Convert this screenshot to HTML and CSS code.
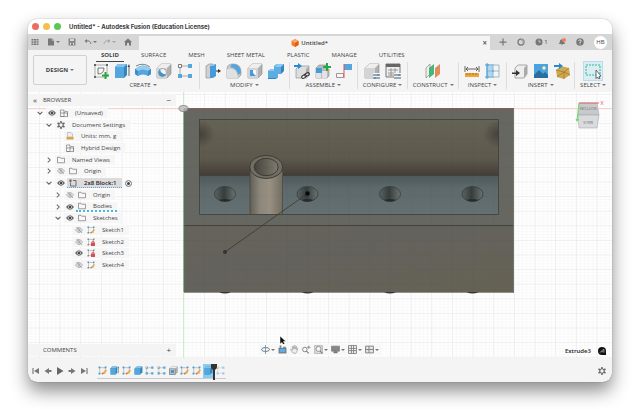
FILE: index.html
```html
<!DOCTYPE html>
<html lang="en">
<head>
    <meta charset="UTF-8">
    <meta name="viewport" content="width=device-width, initial-scale=1.0">
    <title>Untitled* - Autodesk Fusion (Education License)</title>
    <link rel="stylesheet" href="styles.css">
</head>
<body>
    <!-- Shared icons -->
    <svg class="sprite" aria-hidden="true">
        <symbol id="down" viewBox="0 0 10 10"><path d="M2 3.5 5 6.5 8 3.5" fill="none" stroke="#666" stroke-width="1.3"/></symbol>
        <symbol id="right" viewBox="0 0 10 10"><path d="M3.5 2 6.5 5 3.5 8" fill="none" stroke="#666" stroke-width="1.3"/></symbol>
        <symbol id="eye" viewBox="0 0 16 12"><path d="M0 6Q8-5 16 6 8 17 0 6Z" fill="#666"/><circle cx="8" cy="6" r="3.6" fill="#f4f4f4"/><circle cx="8" cy="6" r="2.4" fill="#444"/></symbol>
        <symbol id="eye-off" viewBox="0 0 16 12"><path d="M1 6Q8-4 15 6 8 16 1 6ZM3 0l11 12" fill="none" stroke="#888" stroke-width="1.3"/><circle cx="8" cy="6" r="2.4" fill="none" stroke="#888" stroke-width="1.3"/></symbol>
        <symbol id="folder" viewBox="0 0 16 14"><path d="M1 12.5V1.5h5l1.5 2H15v9Z" fill="#f8f8f8" stroke="#777" stroke-width="1.4"/></symbol>
        <symbol id="parts" viewBox="0 0 16 16"><path d="M1 15V2h7v13ZM1 8h14v7H1M8 8l2-3h5v10" fill="none" stroke="#777" stroke-width="1.3"/></symbol>
        <symbol id="gear" viewBox="0 0 16 16"><path d="M8 0v4M8 12v4M1 4l3.6 2M11.4 10l3.6 2M1 12l3.6-2M11.4 6 15 4" stroke="#666" stroke-width="3"/><circle cx="8" cy="8" r="4.5" fill="none" stroke="#666" stroke-width="2"/></symbol>
        <symbol id="units" viewBox="0 0 16 16"><path d="M3 10V1h7l3 3v6Z" fill="#eee" stroke="#999"/><path d="M1 10h14v5H1Z" fill="#d9a441"/></symbol>
        <symbol id="component" viewBox="0 0 16 16"><path d="M3 7v7h11V3H8" fill="none" stroke="#555" stroke-width="1.6"/><path d="M1 1h4v5H1Z" fill="#666"/></symbol>
        <symbol id="sketch" viewBox="0 0 16 16"><path d="M3 3h10v10H3Z" fill="none" stroke="#999"/><path d="M1 1h3v3H1ZM12 1h3v3h-3ZM1 12h3v3H1Z" fill="#3f9bd8"/><path d="m7 15 1-3 6-6 2 2-6 6Z" fill="#f2a53a"/><path d="m7 15 1-3 2 2Z" fill="#d9502e"/></symbol>
        <symbol id="sketch-lock" viewBox="0 0 16 16"><path d="M3 3h10v10H3Z" fill="none" stroke="#999"/><path d="M1 1h3v3H1ZM12 1h3v3h-3ZM1 12h3v3H1Z" fill="#888"/><path d="M8 9h8v7H8Z" fill="#d84b58"/><path d="M10 9V7q2-2 4 0v2" fill="none" stroke="#d84b58" stroke-width="1.5"/></symbol>
        <symbol id="box" viewBox="0 0 16 16"><path d="M1 4.5 5 1h10v10l-4 4H1Z" fill="#3484c0"/><path d="M1 4.5 5 1h10l-4 3.5Z" fill="#84c3ec"/><path d="M1 4.5h10V15H1Z" fill="#55a6dd"/></symbol>
        <symbol id="extrude" viewBox="0 0 16 16"><path d="M1 4 4 1h9v11l-3 3H1Z" fill="#3484c0"/><path d="M1 4 4 1h9l-3 3Z" fill="#84c3ec"/><path d="M1 4h9v11H1Z" fill="#55a6dd"/><path d="M15 13V4" stroke="#444" stroke-width=".8"/><path d="m13.5 4 1.5-3 1 3Z" fill="#444"/></symbol>
        <symbol id="gray-box" viewBox="0 0 16 16"><path d="M1 5 5 1h10v10l-4 4H1Z" fill="#b1b1b1" stroke="#888" stroke-width=".6"/><path d="M1 5 5 1h10l-4 4Z" fill="#eee"/><path d="M1 5h10v10H1Z" fill="#d4d4d4"/></symbol>
        <symbol id="pattern" viewBox="0 0 16 16"><path d="M3 3h10M3 3v10h10" fill="none" stroke="#aaa"/><path d="M1.5 1.5h3v3h-3Z" fill="#fff" stroke="#777"/><path d="M11 1h4v4h-4ZM1 11h4v4H1ZM11 11h4v4h-4Z" fill="#55a6dd"/></symbol>
    </svg>

    <main class="window">
        <header class="titlebar">
            <span class="light red"></span>
            <span class="light yellow"></span>
            <span class="light green"></span>
            <h1>Untitled* - Autodesk Fusion (Education License)</h1>
        </header>

        <div class="tabbar">
            <div class="quick">
                <button aria-label="Data panel"><svg viewBox="0 0 16 16"><path d="M1 2h4v3H1Zm5 0h4v3H6Zm5 0h4v3h-4ZM1 6.5h4v3H1Zm5 0h4v3H6Zm5 0h4v3h-4ZM1 11h4v3H1Zm5 0h4v3H6Zm5 0h4v3h-4Z" fill="#777"/></svg></button>
                <button class="menu" aria-label="File"><svg viewBox="0 0 16 16"><path d="M2 1h8l4 4v10H2Z" fill="#777"/><path d="M10 1v4h4" fill="none" stroke="#ddd"/></svg><i class="caret"></i></button>
                <button aria-label="Save"><svg viewBox="0 0 16 16"><path d="M1 1h14v14H1Z" fill="#888"/><path d="M4 2h8v4H4ZM4 10h8v4H4Z" fill="#d6d6d6"/><path d="M6 11h4v3H6Z" fill="#666"/></svg></button>
                <button class="menu" aria-label="Undo"><svg viewBox="0 0 16 16"><path d="M4 6q9-2 10 6" fill="none" stroke="#777" stroke-width="2"/><path d="m1 6 5-4v8Z" fill="#777"/></svg><i class="caret"></i></button>
                <button class="menu dim" aria-label="Redo"><svg viewBox="0 0 16 16"><path d="M12 6Q3 4 2 12" fill="none" stroke="#777" stroke-width="2"/><path d="m15 6-5-4v8Z" fill="#777"/></svg><i class="caret"></i></button>
                <button class="home" aria-label="Home"><svg viewBox="0 0 16 16"><path d="M8 1 0 8h2v7h4v-5h4v5h4V8h2Z" fill="#777"/></svg></button>
            </div>
            <div class="doc-tab">
                <svg viewBox="0 0 16 16"><path d="m8 0 7 4v8l-7 4-7-4V4Z" fill="#f47b28"/><path d="m8 0 7 4-7 4-7-4Z" fill="#ffa565"/><path d="m8 8 7-4v8l-7 4Z" fill="#df5d15"/></svg>
                <span>Untitled*</span>
                <button aria-label="Close tab">×</button>
            </div>
            <div class="account">
                <button aria-label="New tab"><svg viewBox="0 0 16 16"><path d="M8 1v14M1 8h14" stroke="#777" stroke-width="2.5"/></svg></button>
                <button aria-label="Extensions"><svg viewBox="0 0 16 16"><circle cx="8" cy="8" r="6" fill="none" stroke="#777" stroke-width="2.5"/><path d="M8 8V2a6 6 0 0 1 5 9Z" fill="#aaa"/><circle cx="8" cy="8" r="2.5" fill="#d6d6d6"/></svg></button>
                <button class="jobs" aria-label="Job status"><svg viewBox="0 0 16 16"><circle cx="8" cy="8" r="7" fill="#777"/><path d="M8 3v5h4" fill="none" stroke="#ddd" stroke-width="1.5"/></svg>1</button>
                <button aria-label="Notifications"><svg viewBox="0 0 16 16"><path d="M1 12q3-2 3-7 4-5 8 0 0 5 3 7ZM6 13h4l-2 2Z" fill="#777"/><circle cx="12" cy="4" r="4" fill="#f08058"/></svg></button>
                <button aria-label="Help"><svg viewBox="0 0 16 16"><circle cx="8" cy="8" r="7.5" fill="#777"/><path d="M5.5 6q0-2.500 2.500-2.500T10.500 6Q10 7.500 8 8v2M8 11v2" fill="none" stroke="#eee" stroke-width="1.7"/></svg></button>
                <button class="avatar">HB</button>
            </div>
        </div>

        <div class="toolbar">
            <button class="workspace">DESIGN <i class="caret"></i></button>
            <div class="ribbon">
                <nav class="ribbon-tabs">
                    <a href="#solid" class="active">SOLID</a>
                    <a href="#surface">SURFACE</a>
                    <a href="#mesh">MESH</a>
                    <a href="#sheet">SHEET METAL</a>
                    <a href="#plastic">PLASTIC</a>
                    <a href="#manage">MANAGE</a>
                    <a href="#utilities">UTILITIES</a>
                </nav>
                <div class="groups">
                    <section class="group create">
                        <div class="tools">
                            <button aria-label="Create sketch"><svg viewBox="0 0 16 16"><path d="M2 2h12v12H2Z" fill="#f8f8f8" stroke="#999" stroke-width=".8"/><path d="M5 5h6q0 6-6 6Z" fill="none" stroke="#555" stroke-width=".8"/><path d="M1 1h2v2H1ZM13 1h2v2h-2ZM1 13h2v2H1Z" fill="#666"/><path d="M12.5 9v7M9 12.5h7" stroke="#27a844" stroke-width="2"/></svg></button>
                            <button aria-label="Extrude"><svg><use href="#extrude"/></svg></button>
                            <button aria-label="Revolve"><svg viewBox="0 0 16 16"><path d="M0 6q8-7 16 0v5l-3 2q-5-3-10 0l-3-2Z" fill="#55a6dd"/><path d="M0 6q8-7 16 0l-3 2q-5-3-10 0Z" fill="#92cdf2"/><path d="M3 8v5L0 11V6ZM13 8v5l3-2V6Z" fill="#3c8dc8"/><path d="M1 3q7-4 14 1" fill="none" stroke="#666" stroke-width=".8"/></svg></button>
                            <button aria-label="Hole"><svg viewBox="0 0 16 16"><use href="#gray-box"/><circle cx="6.5" cy="9.5" r="4" fill="#f3f3f3" stroke="#777" stroke-width=".6"/><path d="M4 6.5a4 4 0 1 0 6 5Q5 11 4 6.5Z" fill="#3e95d2"/></svg></button>
                            <button aria-label="Pattern"><svg><use href="#pattern"/></svg></button>
                        </div>
                        <button class="group-name">CREATE <i class="caret"></i></button>
                    </section>
                    <section class="group">
                        <div class="tools">
                            <button aria-label="Press pull"><svg viewBox="0 0 16 16"><path d="M1 3 4 1h4v13l-3 1H1Z" fill="#d0d0d0" stroke="#888" stroke-width=".6"/><path d="M5 3 8 1h3v12l-3 2H5Z" fill="#459cd8"/><path d="M5 3 8 1h3L8 3Z" fill="#94cef3"/><path d="M11 8h3" stroke="#333"/><path d="m13 6 3 2-3 2Z" fill="#333"/></svg></button>
                            <button aria-label="Fillet"><svg viewBox="0 0 16 16"><path d="M1 15V6q0-5 6-5 8 0 8 8v3l-3 3Z" fill="#cacaca" stroke="#888" stroke-width=".6"/><path d="M1 6h5q5 1 6 9H1Z" fill="#e1e1e1"/><path d="M6 1q9 0 9 9l-3 2Q11 5 4 4Z" fill="#55a6dd"/></svg></button>
                            <button aria-label="Shell"><svg viewBox="0 0 16 16"><use href="#gray-box"/><path d="M3 7h6v6H3Z" fill="#f7f7f7"/><path d="M3 7v6h6l-3-3V7Z" fill="#459cd8"/></svg></button>
                            <button aria-label="Combine"><svg viewBox="0 0 16 16"><path d="m0 8 3-2h3V3l3-2h7v7l-3 3h-3v3l-2 2H0Z" fill="#3484c0"/><path d="M0 8h6V4h7v7h-3v4H0Z" fill="#5cade2"/><path d="m0 8 3-2h3v2ZM6 4l3-3h7l-3 3Z" fill="#8bc9f0"/></svg></button>
                        </div>
                        <button class="group-name">MODIFY <i class="caret"></i></button>
                    </section>
                    <section class="group">
                        <div class="tools">
                            <button aria-label="Insert component"><svg viewBox="0 0 16 16"><path d="m2 6 3-3h10v10l-2 2H2Z" fill="#ddd" stroke="#888" stroke-width=".6"/><path d="M12 6 15 3v10l-3 2Z" fill="#aaa"/><path d="M0 2h4V0l4 3-4 3V4H0Z" fill="#268ad6"/><path d="m8 15 6-3" stroke="#f4f4f4" stroke-width="4"/><g fill="none" stroke="#333"><ellipse cx="10" cy="13.5" rx="2.5" ry="1.5" transform="rotate(-30 10 13.5)"/><ellipse cx="13" cy="11.5" rx="2.5" ry="1.5" transform="rotate(-30 13 11.5)"/></g></svg></button>
                            <button aria-label="New component"><svg viewBox="0 0 16 16"><path d="m1 5 3-3h7v4h3v7l-2 2H1Z" fill="#bbb" stroke="#888" stroke-width=".6"/><path d="M1 5h6v5H1Z" fill="#459cd8"/><path d="M1 10h5v5H1ZM7 8h5v7H7Z" fill="#e2e2e2"/><path d="M12 0v8M8 4h8" stroke="#27a844" stroke-width="2"/></svg></button>
                            <button aria-label="Joint"><svg viewBox="0 0 16 16"><path d="M8 1h8v6H8Z" fill="#55a6dd"/><path d="M.5 10.5h7v4h-7Z" fill="#f8f8f8" stroke="#999"/><path d="M8 1v14" stroke="#e0525b"/></svg></button>
                        </div>
                        <button class="group-name">ASSEMBLE <i class="caret"></i></button>
                    </section>
                    <section class="group">
                        <div class="tools">
                            <button aria-label="Configure"><svg viewBox="0 0 16 16"><use href="#gray-box"/><path d="M9 10h7v6H9Z" fill="#f4f4f4"/><path d="M9 12h7M9 15h7" stroke="#555"/><path d="M13 11h2v2h-2ZM10 14h2v2h-2Z" fill="#459cd8"/></svg></button>
                            <button aria-label="Configuration table"><svg viewBox="0 0 16 16"><path d="M1 1h14v13H1Z" fill="#eee" stroke="#777"/><path d="M1 1h14v3H1Z" fill="#666"/><path d="M3 7h10M3 10h6M3 12h6M6 5v8M10 5v5" stroke="#888" stroke-width=".8"/><path d="M9 10h7v6H9Z" fill="#f4f4f4"/><path d="M9 12h7M9 15h7" stroke="#555"/><path d="M13 11h2v2h-2Z" fill="#459cd8"/></svg></button>
                        </div>
                        <button class="group-name">CONFIGURE <i class="caret"></i></button>
                    </section>
                    <section class="group">
                        <div class="tools">
                            <button aria-label="Offset plane"><svg viewBox="0 0 16 16"><path d="m1 5 4-4v10l-4 4Z" fill="#eee" stroke="#888" stroke-width=".7"/><path d="m4 5 5-4v10l-5 4Z" fill="#44b878"/><path d="m10 5 5-4v10l-5 4Z" fill="#e38c5b"/></svg></button>
                        </div>
                        <button class="group-name">CONSTRUCT <i class="caret"></i></button>
                    </section>
                    <section class="group">
                        <div class="tools">
                            <button aria-label="Measure"><svg viewBox="0 0 16 16"><path d="M1 3v6M15 3v6M2 6h12M4 4 2 6l2 2M12 4l2 2-2 2" fill="none" stroke="#555" stroke-width=".9"/><path d="M1 10h14v4H1Z" fill="#eca536"/><path d="M3 10v2M6 10v2M9 10v2M12 10v2" stroke="#946414" stroke-width=".7"/></svg></button>
                            <button aria-label="Interference"><svg viewBox="0 0 16 16"><path d="M2 1h6v14H2Z" fill="#a9d8f5"/><path d="M2 2h12v12H2ZM2 8h12M8 1v14" fill="none" stroke="#8aa9bd" stroke-width=".8"/><path d="M2 0v16M0 2h4M0 14h4M7 8h2" stroke="#4a9dd6"/></svg></button>
                        </div>
                        <button class="group-name">INSPECT <i class="caret"></i></button>
                    </section>
                    <section class="group">
                        <div class="tools">
                            <button aria-label="Insert derive"><svg viewBox="0 0 16 16"><path d="m3 5 3-3h9v9l-3 4H3Z" fill="#eee" stroke="#888" stroke-width=".7"/><path d="m12 5 3-3v9l-3 4Z" fill="#aaa"/><path d="M0 11V9.5h4V7l4 3-4 3v-2Z" fill="#333"/></svg></button>
                            <button aria-label="Canvas"><svg viewBox="0 0 16 16"><path d="M1 1h14v14H1Z" fill="#4aa2df"/><circle cx="11" cy="5" r="1.7" fill="#fff1b0"/><path d="m1 12 5-5 4 4 2-2 3 3v3H1Z" fill="#286e9f"/></svg></button>
                            <button aria-label="Insert mesh"><svg viewBox="0 0 16 16"><path d="m2 7 5-4 8 2 1 7-6 4-7-2Z" fill="#cfa850"/><path d="m2 7 8 2 5-4M10 9v7M3 14l7-5 6 3" fill="none" stroke="#997733" stroke-width=".7"/><path d="M0 2h5V0l4 3-4 3V4H0Z" fill="#268ad6"/></svg></button>
                        </div>
                        <button class="group-name">INSERT <i class="caret"></i></button>
                    </section>
                    <section class="group">
                        <div class="tools">
                            <button class="selected" aria-label="Select"><svg viewBox="0 0 16 16"><path d="M1 2h14v10H1Z" fill="none" stroke="#35b984" stroke-dasharray="2 1"/><path d="m11 7 5 6-2 .5 1 2-1.5.5-1-2-1.5 1.5Z" fill="#fff" stroke="#444" stroke-width=".8"/></svg></button>
                        </div>
                        <button class="group-name">SELECT <i class="caret"></i></button>
                    </section>
                </div>
            </div>
        </div>

        <div class="viewport">
            <svg class="scene" viewBox="28 92 584 266" preserveAspectRatio="xMidYMid slice" role="img" aria-label="2x8 Block model">
                <defs>
                    <pattern id="minor" x="183.5" y="108.5" width="4.13" height="2.92" patternUnits="userSpaceOnUse"><path d="M0 0h4.13M0 0v2.92" stroke="#000" stroke-opacity=".04" stroke-width=".8"/></pattern>
                    <pattern id="major" x="183.5" y="108.5" width="20.65" height="14.6" patternUnits="userSpaceOnUse"><path d="M0 0h20.65M0 0v14.6" stroke="#000" stroke-opacity=".08"/></pattern>
                    <linearGradient id="wall" x2="0" y2="1"><stop offset="0" stop-color="#656256"/><stop offset=".7" stop-color="#5e594d"/><stop offset="1" stop-color="#443e36"/></linearGradient>
                    <linearGradient id="floor" x2="0" y2="1"><stop offset="0" stop-color="#4f595b"/><stop offset=".35" stop-color="#5d696b"/><stop offset="1" stop-color="#657072"/></linearGradient>
                    <linearGradient id="front" x2="1" y2="1"><stop offset="0" stop-color="#66635b"/><stop offset=".45" stop-color="#64625d"/><stop offset="1" stop-color="#656253"/></linearGradient>
                    <linearGradient id="tube"><stop offset="0" stop-color="#625f56"/><stop offset=".3" stop-color="#8c877a"/><stop offset=".6" stop-color="#989182"/><stop offset="1" stop-color="#716b60"/></linearGradient>
                    <linearGradient id="bore"><stop offset="0" stop-color="#45433c"/><stop offset="1" stop-color="#807b70"/></linearGradient>
                    <linearGradient id="hole"><stop offset="0" stop-color="#5c6462"/><stop offset=".45" stop-color="#353d3d"/><stop offset="1" stop-color="#6c7371"/></linearGradient>
                    <radialGradient id="shade"><stop offset="0" stop-color="#37332d" stop-opacity=".7"/><stop offset="1" stop-color="#37332d" stop-opacity="0"/></radialGradient>
                    <g id="stud"><ellipse rx="10.5" ry="7.5" fill="url(#hole)" stroke="#363d3c" stroke-width=".8"/><path d="M-6 6Q0 4 6 6 0 9-6 6Z" fill="#242c2c"/></g>
                    <clipPath id="pocket"><path d="M199 119h300v95H199Z"/></clipPath>
                </defs>
                <path d="M28 92h584v266H28Z" fill="#fefefe"/>
                <path d="M28 92h584v266H28Z" fill="url(#minor)"/>
                <path d="M28 92h584v266H28Z" fill="url(#major)"/>
                <path d="M28 108.5h584" stroke="#f9cfcf"/>
                <path d="M183.5 92v266" stroke="#c5f0c8"/>

                <!-- Block -->
                <path d="M184 109h330v116H184Z" fill="#666760"/>
                <path d="M184 225h330v67H184Z" fill="url(#front)"/>
                <g clip-path="url(#pocket)">
                    <path d="M199 119h300v56H199Z" fill="url(#wall)"/>
                    <ellipse cx="199" cy="134" rx="16" ry="14" fill="url(#shade)"/>
                    <ellipse cx="499" cy="134" rx="16" ry="14" fill="url(#shade)"/>
                    <path d="M199 175h300v39H199Z" fill="url(#floor)"/>
                </g>
                <path d="M199 119.5h299.5v95H199.5v-95M199 175.5h300" fill="none" stroke="#3c3f3b" stroke-width=".8"/>
                <use href="#stud" x="225" y="194"/>
                <use href="#stud" x="307.5" y="194"/>
                <use href="#stud" x="390" y="194"/>
                <use href="#stud" x="472.5" y="194"/>
                <path d="M250 167h33v47h-33Z" fill="url(#tube)"/>
                <path d="M250 167v47M282.5 167v47" stroke="#45443d" stroke-width=".7"/>
                <ellipse cx="266.2" cy="167" rx="16.5" ry="11.5" fill="#716e65" stroke="#38372f" stroke-width=".9"/>
                <ellipse cx="266.2" cy="167" rx="12" ry="8.7" fill="url(#bore)" stroke="#38372f" stroke-width=".9"/>
                <path d="M184 225.5h330" stroke="#44443f"/>
                <path d="M184 292.5h330M513.5 109v184" stroke="#77776e" stroke-width=".8" fill="none"/>
                <path d="M184 109h330v184H184Z" fill="url(#major)" opacity=".5"/>
                <path d="M184 108.5h330" stroke="#875f5c"/>
                <path d="M184 109v183" stroke="#527653"/>
                <path d="M219 292h12q-6 3-12 0ZM301.5 292h12q-6 3-12 0ZM384 292h12q-6 3-12 0ZM466.5 292h12q-6 3-12 0Z" fill="#353630"/>
                <path d="m225 252 82.5-58.5" stroke="#373832" stroke-width=".8"/>
                <circle cx="225" cy="252" r="2" fill="#333"/>
                <circle cx="307.5" cy="193.5" r="2.2" fill="#0a0a0a"/>
                <ellipse cx="183.5" cy="108.5" rx="4.5" ry="3" fill="#bbb" fill-opacity=".8" stroke="#777" stroke-width=".8"/>

                <!-- View cube -->
                <path d="M579 103h18l2 12h-21Z" fill="#c7c9ca" stroke="#aaa" stroke-width=".6"/>
                <path d="M578 115h21l-2 13h-18Z" fill="#d9dbdc" stroke="#aaa" stroke-width=".6"/>
                <path d="M579 103h20" stroke="#e76464"/>
                <path d="m579 103-2 18" stroke="#66dd70"/>
                <path d="m575.5 119 1.5 3 2-3Z" fill="#66dd70"/>
                <text class="cube-text" x="588" y="107" transform="rotate(180 588 107)">BOTTOM</text>
                <text class="cube-text" x="588" y="121" transform="rotate(180 588 121)">BACK</text>
                <text class="axis-text" x="602" y="105">X</text>

                <path d="M280 336v8l2-1.5 1.5 3 1.5-1-1.5-3h2.5Z" fill="#111" stroke="#fff" stroke-width=".5"/>
            </svg>

            <aside class="browser">
                <div class="panel-head"><button aria-label="Collapse browser">«</button><h2>BROWSER</h2><button aria-label="Minimize">−</button></div>
                <ul class="tree">
                    <li class="level-0"><button><svg><use href="#down"/></svg></button><span class="node"><svg><use href="#eye"/></svg><svg><use href="#parts"/></svg><span>(Unsaved)</span></span></li>
                    <li class="level-1"><button><svg><use href="#down"/></svg></button><span class="node"><svg><use href="#gear"/></svg><span>Document Settings</span></span></li>
                    <li class="level-2 leaf"><span class="node"><svg><use href="#units"/></svg><span>Units: mm, g</span></span></li>
                    <li class="level-2 leaf"><span class="node"><svg><use href="#parts"/></svg><span>Hybrid Design</span></span></li>
                    <li class="level-1"><button><svg><use href="#right"/></svg></button><span class="node"><svg><use href="#folder"/></svg><span>Named Views</span></span></li>
                    <li class="level-1"><button><svg><use href="#right"/></svg></button><span class="node"><svg><use href="#eye-off"/></svg><svg><use href="#folder"/></svg><span>Origin</span></span></li>
                    <li class="level-1"><button><svg><use href="#down"/></svg></button><span class="node"><svg><use href="#eye"/></svg><span class="current"><svg><use href="#component"/></svg><span>2x8 Block:1</span></span></span><input type="radio" name="active" aria-label="Activate 2x8 Block:1" checked></li>
                    <li class="level-2"><button><svg><use href="#right"/></svg></button><span class="node"><svg><use href="#eye-off"/></svg><svg><use href="#folder"/></svg><span>Origin</span></span></li>
                    <li class="level-2"><button><svg><use href="#right"/></svg></button><span class="node"><svg><use href="#eye"/></svg><span class="marked"><svg><use href="#folder"/></svg><span>Bodies</span></span></span></li>
                    <li class="level-2"><button><svg><use href="#down"/></svg></button><span class="node"><svg><use href="#eye"/></svg><svg><use href="#folder"/></svg><span>Sketches</span></span></li>
                    <li class="level-3 leaf"><span class="node"><svg><use href="#eye-off"/></svg><svg><use href="#sketch"/></svg><span>Sketch1</span></span></li>
                    <li class="level-3 leaf"><span class="node"><svg><use href="#eye-off"/></svg><svg><use href="#sketch-lock"/></svg><span>Sketch2</span></span></li>
                    <li class="level-3 leaf"><span class="node"><svg><use href="#eye"/></svg><svg><use href="#sketch-lock"/></svg><span>Sketch3</span></span></li>
                    <li class="level-3 leaf"><span class="node"><svg><use href="#eye-off"/></svg><svg><use href="#sketch"/></svg><span>Sketch4</span></span></li>
                </ul>
            </aside>

            <div class="comments panel-head"><h2>COMMENTS</h2><button aria-label="Add comment">+</button></div>

            <nav class="view-tools">
                <button class="menu" aria-label="Orbit"><svg viewBox="0 0 16 16"><ellipse cx="8" cy="8" rx="7" ry="3.5" fill="none" stroke="#666" stroke-width="1.5"/><path d="M8 0v16" stroke="#459cd8" stroke-width="1.5"/></svg><i class="caret"></i></button>
                <button aria-label="Look at"><svg viewBox="0 0 16 16"><path d="M1 5h14v10H1Z" fill="#777"/><path d="M3 7h10v6H3Z" fill="#55b0ee"/><path d="M3 1h3v4H3ZM9 3h5v2H9Z" fill="#777"/></svg></button>
                <button aria-label="Pan"><svg viewBox="0 0 16 16"><path d="M5 14 1 8l1-1 3 2-1-6 1-1 2 5V1h2v6l2-5 1 1-1 5 3-2-2 6-2 3Z" fill="#eee" stroke="#888"/></svg></button>
                <button aria-label="Zoom"><svg viewBox="0 0 16 16"><circle cx="5" cy="8" r="4" fill="none" stroke="#777" stroke-width="1.5"/><path d="m8 11 4 4" stroke="#a46c3c" stroke-width="2"/><path d="M12 1v6M9 4h6" stroke="#555"/></svg></button>
                <button class="menu" aria-label="Fit"><svg viewBox="0 0 16 16"><path d="M1 1h14v14H1Z" fill="#ddd" stroke="#999"/><circle cx="8" cy="7" r="4.5" fill="#f4f4f4" stroke="#777" stroke-width="1.3"/><path d="m11 11 4 4" stroke="#a46c3c" stroke-width="2"/></svg><i class="caret"></i></button>
                <button class="menu" aria-label="Display"><svg viewBox="0 0 16 16"><path d="M1 2h14v9H1ZM5 12h6v2H5Z" fill="#888" stroke="#666"/></svg><i class="caret"></i></button>
                <button class="menu" aria-label="Grid"><svg viewBox="0 0 16 16"><path d="M1 1h14v14H1ZM1 6h14M1 10h14M6 1v14M10 1v14" fill="none" stroke="#777" stroke-width="1.5"/></svg><i class="caret"></i></button>
                <button class="menu" aria-label="Viewports"><svg viewBox="0 0 16 16"><path d="M1 2h14v12H1ZM1 8h14M7 2v12" fill="#e6e6e6" stroke="#777" stroke-width="1.5"/></svg><i class="caret"></i></button>
            </nav>

            <div class="status"><span>Extrude3</span><svg viewBox="0 0 16 16"><path d="M8 0a8 8 0 1 0 0 16h8V8a8 8 0 0 0-8-8Z" fill="#111"/><path d="m4 11 6-6h2v6M6 11l4-4v4" fill="none" stroke="#ccc" stroke-width="1.2"/></svg></div>
        </div>

        <footer class="timeline">
            <div class="playback">
                <button aria-label="Go to start"><svg viewBox="0 0 16 16"><path d="M2 2v12" stroke="#666" stroke-width="2"/><path d="M14 2v12L4 8Z" fill="#777"/></svg></button>
                <button aria-label="Step back"><svg viewBox="0 0 16 16"><path d="M10 2v4h5v4h-5v4L1 8Z" fill="#777"/></svg></button>
                <button aria-label="Play"><svg viewBox="0 0 16 16"><path d="M2 0v16L15 8Z" fill="#666"/></svg></button>
                <button aria-label="Step forward"><svg viewBox="0 0 16 16"><path d="M6 2v4H1v4h5v4l9-6Z" fill="#777"/></svg></button>
                <button aria-label="Go to end"><svg viewBox="0 0 16 16"><path d="M14 2v12" stroke="#666" stroke-width="2"/><path d="M2 2v12l10-6Z" fill="#777"/></svg></button>
            </div>
            <div class="features">
                <button aria-label="Sketch1"><svg><use href="#sketch"/></svg></button>
                <button aria-label="Extrude1"><svg><use href="#extrude"/></svg></button>
                <button aria-label="Sketch2"><svg><use href="#sketch"/></svg></button>
                <button aria-label="Extrude2"><svg><use href="#box"/></svg></button>
                <button aria-label="Pattern1"><svg><use href="#pattern"/></svg></button>
                <button aria-label="Pattern2"><svg><use href="#pattern"/></svg></button>
                <button aria-label="Shell1"><svg viewBox="0 0 16 16"><use href="#gray-box"/><path d="M3 7h6v6H3Z" fill="#3f9bd8"/><path d="M1 5h10v10H1Z" fill="none" stroke="#666"/></svg></button>
                <button aria-label="Sketch3"><svg><use href="#sketch"/></svg></button>
                <button aria-label="Sketch4"><svg><use href="#sketch"/></svg></button>
                <button class="selected" aria-label="Extrude3"><svg><use href="#box"/></svg><svg class="marker" viewBox="0 0 6 16"><path d="M0 0h6v4L4 6v10H2V6L0 4Z" fill="#333"/></svg></button>
                <button class="dim" aria-label="Pattern3"><svg><use href="#pattern"/></svg></button>
            </div>
            <button class="settings" aria-label="Timeline settings"><svg><use href="#gear"/></svg></button>
        </footer>
    </main>
</body>
</html>
```

FILE: styles.css
```css
* {
    box-sizing: border-box;
}
body {
    margin: 0;
    height: 100vh;
    padding: 19px 28px 37px;
    background: #fff;
    color: #444;
    font: 6px/8px "Open Sans", "Noto Sans", sans-serif;
}
h1, h2, ul {
    margin: 0;
    padding: 0;
    font-size: inherit;
}
h2 {
    font-weight: 400;
}
button {
    display: flex;
    align-items: center;
    justify-content: center;
    margin: 0;
    padding: 0;
    border: 0;
    background: none;
    color: inherit;
    font: inherit;
}
a {
    color: inherit;
    text-decoration: none;
}
svg {
    display: block;
    width: 8px;
    height: 8px;
    flex: none;
}
.sprite {
    position: absolute;
    width: 0;
    height: 0;
}
.caret {
    border: 2px solid transparent;
    border-top-color: #777;
    border-bottom: 0;
    margin-left: 2px;
}
.dim {
    opacity: 0.5;
}
.window {
    display: flex;
    flex-direction: column;
    height: 100%;
    border-radius: 9px;
    overflow: hidden;
    background: #f4f4f4;
    box-shadow: 0 0 1px rgba(0,0,0,0.5), 0 9px 18px rgba(0,0,0,0.45);
}

/* Title bar and document tabs */
.titlebar {
    display: flex;
    align-items: center;
    gap: 4px;
    height: 15px;
    padding-left: 4px;
    background: #fff;
}
.titlebar h1 {
    margin-left: 4px;
    font-family: Inter, sans-serif;
    font-weight: 700;
    color: #3c3c3c;
}
.light {
    width: 7px;
    height: 7px;
    border-radius: 50%;
}
.red { background: #ed6a5f; }
.yellow { background: #f5bf4f; }
.green { background: #61c554; }
.tabbar {
    display: flex;
    height: 16px;
    background: #d6d6d6;
}
.quick {
    display: flex;
    align-items: center;
    gap: 8px;
    width: 111px;
    padding-left: 3px;
}
.quick .caret {
    margin-left: 1px;
}
.quick .menu + .menu {
    margin-left: -2px;
}
.doc-tab {
    flex: 1;
    display: flex;
    align-items: center;
    gap: 2px;
    margin-top: 2px;
    padding-right: 3px;
    background: #f4f4f4;
    font-weight: 600;
}
.doc-tab svg {
    margin-left: auto;
}
.doc-tab button {
    margin-left: auto;
    font-size: 8px;
}
.account {
    display: flex;
    align-items: center;
    justify-content: space-between;
    width: 122px;
    padding: 0 5px 0 9px;
}
.jobs {
    gap: 1px;
}
.avatar {
    width: 13px;
    height: 13px;
    border-radius: 50%;
    background: #fff;
}

/* Ribbon */
.toolbar {
    display: flex;
    height: 42px;
}
.workspace {
    width: 54px;
    height: 30px;
    margin: 5px 5px 0;
    border: 1px solid #d0d0d0;
    border-radius: 2px;
    font-weight: 700;
}
.ribbon {
    flex: 1;
}
.ribbon-tabs {
    display: flex;
    gap: 22px;
    padding-left: 9px;
}
.ribbon-tabs a {
    height: 12px;
    padding-top: 1px;
}
.ribbon-tabs .active {
    margin: 0 -5px;
    padding: 1px 5px 0;
    border-bottom: 1px solid #444;
    font-weight: 700;
}
.groups {
    display: flex;
    margin-right: 1px;
}
.group {
    flex: auto;
    padding: 0 4px;
    border-left: 1px solid #ddd;
}
.create {
    flex: none;
    padding: 0 6px 0 1px;
    border-left: 0;
}
.tools {
    display: flex;
    align-items: center;
    justify-content: center;
    gap: 5px;
    height: 18px;
}
.tools svg {
    width: 16px;
    height: 16px;
}
.tools .selected {
    width: 20px;
    height: 20px;
    border: 1px solid #bcdce9;
    background: #d9edf5;
}
.group-name {
    width: 100%;
    height: 9px;
    white-space: nowrap;
}

/* Canvas and the panels over it */
.viewport {
    flex: 1;
    position: relative;
    display: grid;
    grid-template-columns: 148px 1fr 148px;
    grid-template-rows: 1fr 14px;
    min-height: 0;
}
.scene {
    position: absolute;
    inset: 0;
    width: 100%;
    height: 100%;
}
.cube-text {
    font-size: 4px;
    text-anchor: middle;
    fill: #777;
}
.axis-text {
    font-size: 6px;
    text-anchor: middle;
    fill: #e76464;
}
.browser {
    position: relative;
    grid-row: 1;
    grid-column: 1;
    padding-top: 2px;
}
.panel-head {
    display: flex;
    align-items: center;
    height: 12px;
    padding: 0 5px;
    background: #f4f4f4;
}
.panel-head h2 {
    flex: 1;
    margin-left: 6px;
}
.panel-head button {
    font-size: 8px;
}
.tree {
    display: grid;
    grid-auto-rows: 1fr;
    height: 164px;
    margin-top: 1px;
    list-style: none;
}
.tree li {
    display: flex;
    align-items: center;
}
.tree button {
    width: 12px;
}
.level-0 { padding-left: 6px; }
.level-1 { padding-left: 15px; }
.level-2 { padding-left: 24px; }
.level-3 { padding-left: 33px; }
.leaf .node {
    margin-left: 12px;
}
.node, .current, .marked {
    display: flex;
    align-items: center;
    height: 10px;
}
.node {
    background: #f6f6f6;
}
.node svg {
    margin: 0 2px;
}
.node svg + span {
    padding: 0 5px;
}
.node .current, .node .marked {
    padding: 0;
}
.current {
    background: #dcdcdc;
    border-bottom: 1px dotted #6b9fe0;
    color: #222;
    font-weight: 600;
}
.marked {
    border-bottom: 2px dotted #4db4e0;
}
.tree input {
    appearance: none;
    width: 7px;
    height: 7px;
    margin: 0 0 0 3px;
    border: 1px solid #999;
    border-radius: 50%;
    background: #345;
    box-shadow: inset 0 0 0 1px #fff;
}
.comments {
    position: relative;
    grid-row: 2;
    grid-column: 1;
    padding-left: 9px;
}
.view-tools {
    position: relative;
    grid-row: 2;
    grid-column: 2;
    justify-self: center;
    display: flex;
    align-items: center;
    gap: 3px;
    height: 11px;
    padding: 0 2px;
    background: #f8f8f8;
}
.view-tools svg {
    width: 9px;
    height: 9px;
}
.view-tools .caret {
    margin-left: 1px;
}
.status {
    position: relative;
    grid-row: 2;
    grid-column: 3;
    display: flex;
    align-items: center;
    justify-content: flex-end;
    gap: 7px;
    height: 14px;
    padding-right: 6px;
    color: #222;
    font-weight: 600;
}

/* Timeline */
.timeline {
    display: flex;
    align-items: center;
    height: 24px;
    padding: 2px 6px 0 4px;
}
.playback {
    display: flex;
    gap: 4px;
}
.features {
    display: grid;
    grid-template-columns: repeat(11, 1fr);
    width: 129px;
    height: 15px;
    margin-left: 9px;
    border-bottom: 1px solid #ccc;
}
.features svg {
    width: 9px;
    height: 9px;
}
.features .selected {
    position: relative;
    background: #8accf0;
}
.features .marker {
    position: absolute;
    top: 0;
    right: -3px;
    width: 6px;
    height: 16px;
}
.settings {
    margin-left: auto;
}
```
